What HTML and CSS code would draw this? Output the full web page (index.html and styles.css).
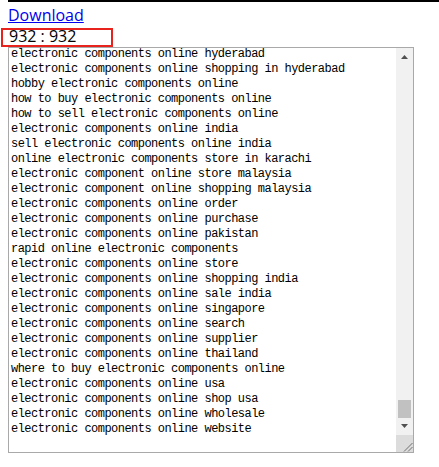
FILE: index.html
```html
<!DOCTYPE html>
<html lang="en">
<head>
<meta charset="utf-8">
<title>Keywords</title>
<link rel="stylesheet" href="styles.css">
</head>
<body>
<div class="rule"></div>
<a class="download" href="#">Download</a>
<div class="count">932 : 932</div>
<div class="box">
  <div class="text">
    <div class="line">electronic components online hyderabad</div>
    <div class="line">electronic components online shopping in hyderabad</div>
    <div class="line">hobby electronic components online</div>
    <div class="line">how to buy electronic components online</div>
    <div class="line">how to sell electronic components online</div>
    <div class="line">electronic components online india</div>
    <div class="line">sell electronic components online india</div>
    <div class="line">online electronic components store in karachi</div>
    <div class="line">electronic component online store malaysia</div>
    <div class="line">electronic component online shopping malaysia</div>
    <div class="line">electronic components online order</div>
    <div class="line">electronic components online purchase</div>
    <div class="line">electronic components online pakistan</div>
    <div class="line">rapid online electronic components</div>
    <div class="line">electronic components online store</div>
    <div class="line">electronic components online shopping india</div>
    <div class="line">electronic components online sale india</div>
    <div class="line">electronic components online singapore</div>
    <div class="line">electronic components online search</div>
    <div class="line">electronic components online supplier</div>
    <div class="line">electronic components online thailand</div>
    <div class="line">where to buy electronic components online</div>
    <div class="line">electronic components online usa</div>
    <div class="line">electronic components online shop usa</div>
    <div class="line">electronic components online wholesale</div>
    <div class="line">electronic components online website</div>
  </div>
  <div class="scrollbar">
    <div class="btn up">
      <svg width="7" height="4" viewBox="0 0 7 4"><polygon points="0,4 7,4 3.5,0" fill="#505050"/></svg>
    </div>
    <div class="track"><div class="thumb"></div></div>
    <div class="btn down">
      <svg width="7" height="4" viewBox="0 0 7 4"><polygon points="0,0 7,0 3.5,4" fill="#505050"/></svg>
    </div>
    <div class="resizer">
      <svg width="17" height="17" viewBox="0 0 17 17">
        <line x1="8" y1="16.5" x2="16.5" y2="8" stroke="#707070" stroke-width="1"/>
        <line x1="12" y1="16.5" x2="16.5" y2="12" stroke="#707070" stroke-width="1"/>
      </svg>
    </div>
  </div>
</div>
</body>
</html>
```

FILE: styles.css
```css
html, body {
  margin: 0;
  background: #fff;
}

body {
  padding: 0 8px;
  font-family: "Open Sans", sans-serif;
  font-size: 16px;
  color: #000;
}

.rule {
  height: 2px;
  background: #000;
  margin-right: -8px;
}

.download {
  display: block;
  width: max-content;
  margin-top: 3px;
  line-height: 20px;
  color: #0000ee;
  text-decoration: underline;
}

.count {
  box-sizing: border-box;
  width: 112px;
  height: 19px;
  margin: 3px 0 0 -7px;
  padding-left: 6px;
  border: 2px solid #e8221c;
  line-height: 12px;
}

.box {
  box-sizing: border-box;
  width: 406px;
  height: 406px;
  border: 1px solid #a9a9a9;
  display: flex;
  background: #fff;
}

/* content is scrolled to the end, so lines stack from the bottom */
.text {
  flex: 1;
  overflow: hidden;
  display: flex;
  flex-direction: column;
  justify-content: flex-end;
  padding: 2px 2px 15px;
  font-family: "Liberation Mono", monospace;
  font-size: 12px;
  line-height: 15px;
  letter-spacing: -0.53px;
  white-space: pre;
  color: #000;
}

.line {
  flex-shrink: 0;
  height: 15px;
}

.scrollbar {
  width: 17px;
  display: flex;
  flex-direction: column;
  background: #f1f1f1;
}

.btn {
  height: 17px;
  display: flex;
  align-items: center;
  justify-content: center;
}

.btn svg {
  display: block;
}

.down svg {
  margin-bottom: 2px;
}

.track {
  flex: 1;
  display: flex;
  flex-direction: column;
  justify-content: flex-end;
}

.thumb {
  height: 18px;
  margin: 0 2px;
  background: #c1c1c1;
}

.resizer {
  height: 17px;
  background: #dcdcdc;
}

.resizer svg {
  display: block;
}
```
